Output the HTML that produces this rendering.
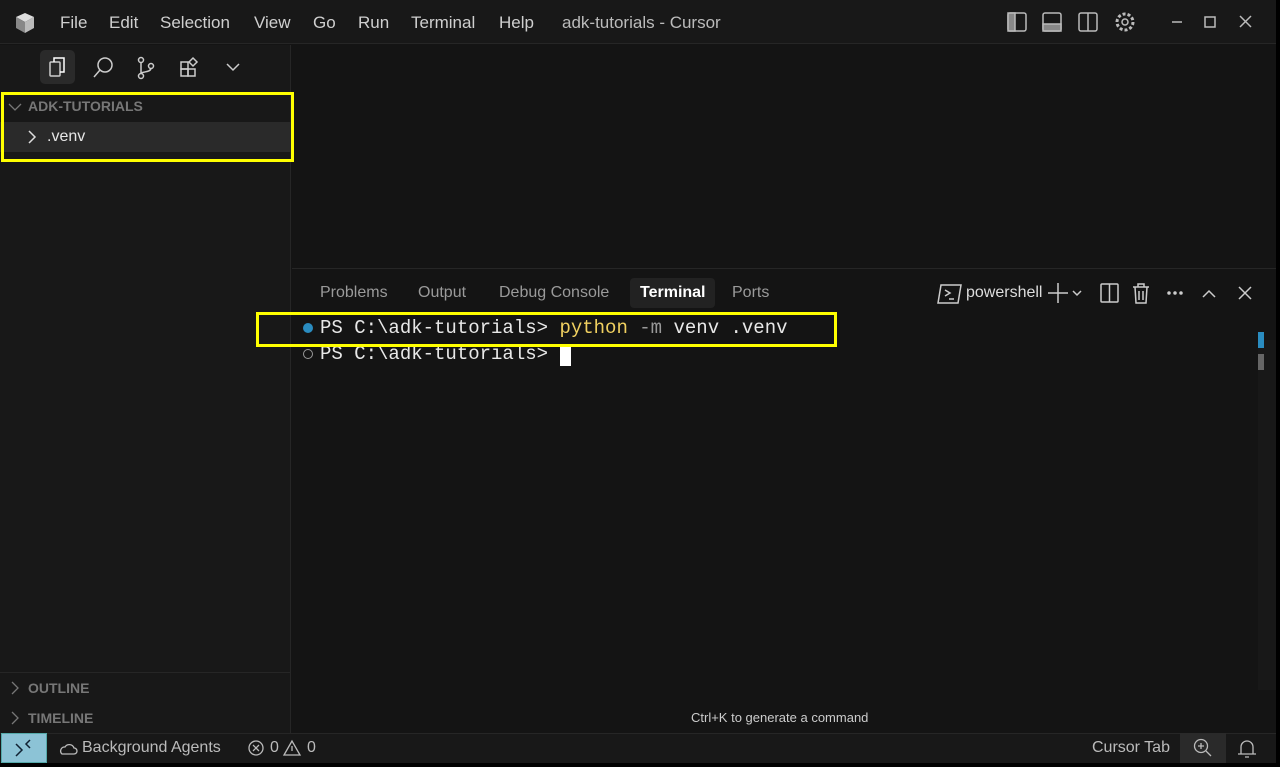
<!DOCTYPE html>
<html><head><style>
*{margin:0;padding:0;box-sizing:border-box}
body{width:1280px;height:767px;background:#000;font-family:"Liberation Sans",sans-serif;position:relative;overflow:hidden;color:#ccc}
.a{position:absolute}
.menu span{position:absolute;top:13px;font-size:17px;color:#cfcfcf}
.mono{font-family:"Liberation Mono",monospace;font-size:19px;color:#e8e8e8;white-space:pre}
.tab{position:absolute;top:284px;font-size:16px;color:#9a9a9a}
</style></head><body>
<div class="a" style="left:0;top:0;width:1276px;height:763px;background:#141414"></div>
<div class="a" style="left:0;top:0;width:1276px;height:44px;background:#181818;border-bottom:1px solid #262626"></div>
<svg class="a" style="left:14px;top:13px" width="22" height="20" viewBox="0 0 22 20"><path d="M2 4L11 0L20 4L11 9Z" fill="#ddd"/><path d="M2 4L11 9L11 20L2 15Z" fill="#888"/><path d="M20 4L11 9L11 20L20 15Z" fill="#bbb"/></svg>
<div class="menu"><span style="left:60px">File</span><span style="left:109px">Edit</span><span style="left:160px">Selection</span><span style="left:254px">View</span><span style="left:313px">Go</span><span style="left:358px">Run</span><span style="left:411px">Terminal</span><span style="left:499px">Help</span><span style="left:562px;color:#bbb">adk-tutorials - Cursor</span></div>
<svg class="a" style="left:1005px;top:10px" width="260" height="26" fill="none" stroke="#bbb" stroke-width="1.5">
<rect x="3" y="3" width="18" height="18" rx="2"/><rect x="3" y="3" width="7" height="18" fill="#888"/>
<rect x="38" y="3" width="18" height="18" rx="2"/><rect x="38" y="14" width="18" height="7" fill="#888"/>
<rect x="74" y="3" width="18" height="18" rx="2"/><line x1="83" y1="3" x2="83" y2="21"/>
<circle cx="120" cy="12" r="3"/><circle cx="120" cy="12" r="8" stroke-dasharray="3 2" stroke-width="3"/>
<line x1="167" y1="12" x2="177" y2="12"/><rect x="200" y="7" width="10" height="10"/><path d="M235 6l11 11M246 6l-11 11"/></svg>
<!-- sidebar -->
<div class="a" style="left:0;top:45px;width:291px;height:688px;background:#181818;border-right:1px solid #262626"></div>
<div class="a" style="left:40px;top:50px;width:35px;height:34px;background:#2a2a2a;border-radius:5px"></div>
<svg class="a" style="left:45px;top:54px" width="210" height="28" fill="none" stroke="#ccc" stroke-width="1.5">
<rect x="5" y="8" width="10" height="14" rx="1"/><path d="M9 8V4h10v14h-4" stroke="#fff"/>
<circle cx="60" cy="11" r="7"/><path d="M55 16l-6 7"/>
<circle cx="96" cy="6" r="2.5"/><circle cx="96" cy="22" r="2.5"/><circle cx="106" cy="12" r="2.5"/><path d="M96 8v12M106 14c0 5-10 3-10 6"/>
<rect x="136" y="8" width="7" height="7"/><rect x="136" y="15" width="7" height="7"/><rect x="143" y="15" width="7" height="7"/><path d="M148 4l4 4-4 4-4-4z"/>
<path d="M182 10l6 6 6-6"/></svg>
<div class="a" style="left:0;top:122px;width:291px;height:30px;background:#2a2a2a"></div>
<svg class="a" style="left:8px;top:100px" width="14" height="14" fill="none" stroke="#777" stroke-width="1.3"><path d="M1 4l6 6 6-6"/></svg>
<div class="a" style="left:28px;top:98px;font-size:14px;font-weight:bold;color:#777">ADK-TUTORIALS</div>
<svg class="a" style="left:26px;top:129px" width="12" height="16" fill="none" stroke="#ddd" stroke-width="1.5"><path d="M3 2l6 6-6 6"/></svg>
<div class="a" style="left:47px;top:128px;font-size:16px;color:#e6e6e6">.venv</div>
<div class="a" style="left:1px;top:92px;width:293px;height:70px;border:3px solid #ffff00"></div>
<div class="a" style="left:0;top:672px;width:291px;border-top:1px solid #262626"></div>
<svg class="a" style="left:8px;top:680px" width="14" height="45" fill="none" stroke="#777" stroke-width="1.3"><path d="M4 2l6 6-6 6M4 32l6 6-6 6"/></svg>
<div class="a" style="left:28px;top:680px;font-size:14px;font-weight:bold;color:#777">OUTLINE</div>
<div class="a" style="left:28px;top:710px;font-size:14px;font-weight:bold;color:#777">TIMELINE</div>
<!-- panel -->
<div class="a" style="left:292px;top:268px;width:984px;border-top:1px solid #262626"></div>
<div class="tab" style="left:320px">Problems</div><div class="tab" style="left:418px">Output</div><div class="tab" style="left:499px">Debug Console</div>
<div class="a" style="left:630px;top:278px;width:85px;height:30px;background:#222;border-radius:4px"></div>
<div class="tab" style="left:640px;color:#fff;font-weight:bold">Terminal</div><div class="tab" style="left:732px">Ports</div>
<svg class="a" style="left:937px;top:282px" width="320" height="24" fill="none" stroke="#ccc" stroke-width="1.5">
<path d="M2 3h20l-3 18H-1z" transform="translate(2 0)"/><path d="M8 8l5 3-5 3M12 17h5"/>
<path d="M121 1v20M111 11h20M136 9l4 4 4-4"/>
<rect x="164" y="2" width="17" height="18" rx="1"/><line x1="172.5" y1="2" x2="172.5" y2="20"/>
<path d="M196 5h16M201 5V2h6v3M198 5l1 16h10l1-16M202 9v9M206 9v9"/>
<circle cx="232" cy="11" r="1" fill="#ccc"/><circle cx="238" cy="11" r="1" fill="#ccc"/><circle cx="244" cy="11" r="1" fill="#ccc"/>
<path d="M266 15l6-6 6 6M302 5l12 12M314 5l-12 12"/></svg>
<div class="a" style="left:966px;top:284px;font-size:16px;color:#ddd">powershell</div>
<div class="a" style="left:303px;top:323px;width:10px;height:10px;border-radius:50%;background:#2a8cc0"></div>
<div class="a" style="left:303px;top:349px;width:10px;height:10px;border-radius:50%;border:1.5px solid #999"></div>
<div class="a mono" style="left:320px;top:317px">PS C:\adk-tutorials&gt; <span style="color:#f0d060">python</span> <span style="color:#999">-m</span> venv .venv</div>
<div class="a mono" style="left:320px;top:343px">PS C:\adk-tutorials&gt; </div>
<div class="a" style="left:560px;top:344px;width:11px;height:22px;background:#fff"></div>
<div class="a" style="left:256px;top:312px;width:581px;height:35px;border:3px solid #ffff00"></div>
<div class="a" style="left:1258px;top:332px;width:6px;height:16px;background:#2a8cc0"></div>
<div class="a" style="left:1258px;top:354px;width:6px;height:16px;background:#666"></div>
<div class="a" style="left:1258px;top:340px;width:18px;height:350px;background:#181818"></div>
<div class="a" style="left:1258px;top:332px;width:6px;height:16px;background:#2a8cc0"></div>
<div class="a" style="left:1258px;top:354px;width:6px;height:16px;background:#666"></div>
<div class="a" style="left:691px;top:710px;font-size:13px;color:#ccc">Ctrl+K to generate a command</div>
<!-- status -->
<div class="a" style="left:0;top:733px;width:1276px;height:30px;background:#181818;border-top:1px solid #262626"></div>
<div class="a" style="left:1px;top:733px;width:46px;height:30px;background:#8cc3d6;border:1px solid #5aa"></div>
<svg class="a" style="left:14px;top:738px" width="20" height="20" fill="none" stroke="#123" stroke-width="1.5"><path d="M2 18l6-6-6-6M16 2l-4 4 4 4"/></svg>
<svg class="a" style="left:58px;top:740px" width="80" height="18" fill="none" stroke="#bbb" stroke-width="1.3"><path d="M4 14h12a3 3 0 0 0 0-6 5 5 0 0 0-9-1 4 4 0 0 0-3 7z"/></svg>
<div class="a" style="left:82px;top:739px;font-size:16px;color:#bbb">Background Agents</div>
<svg class="a" style="left:246px;top:738px" width="60" height="20" fill="none" stroke="#bbb" stroke-width="1.3"><circle cx="10" cy="10" r="7"/><path d="M7 7l6 6M13 7l-6 6M46 3l-8 14h16z M46 8v5"/></svg>
<div class="a" style="left:270px;top:739px;font-size:16px;color:#bbb">0</div>
<div class="a" style="left:307px;top:739px;font-size:16px;color:#bbb">0</div>
<div class="a" style="left:1092px;top:739px;font-size:16px;color:#bbb">Cursor Tab</div>
<div class="a" style="left:1180px;top:733px;width:46px;height:30px;background:#2a2a2a"></div>
<svg class="a" style="left:1192px;top:737px" width="80" height="22" fill="none" stroke="#bbb" stroke-width="1.3"><circle cx="9" cy="9" r="6.5"/><path d="M6 9h6M9 6v6M14 14l5 5"/><path d="M49 17V10a6 6 0 0 1 12 0v7zM46 17h18M53 20h4"/></svg>
</body></html>
